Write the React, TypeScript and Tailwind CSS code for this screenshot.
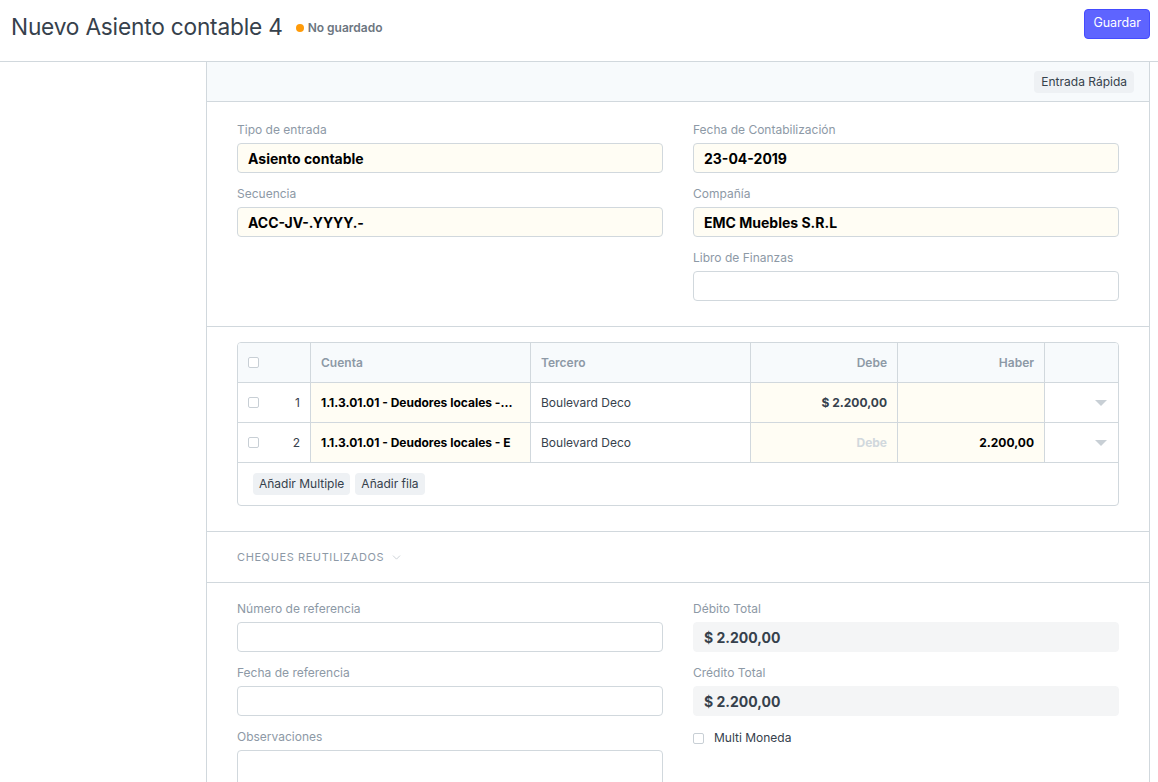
import { ChevronDown } from 'lucide-react';

const font = { fontFamily: 'Inter, "Noto Sans", sans-serif' };

function Label({ children }: { children: React.ReactNode }) {
  return <div className="text-[12px] leading-[14px] text-[#8d99a6] mb-[6px]">{children}</div>;
}

function Field({ label, value, tone = 'white' }: { label: string; value?: string; tone?: 'yellow' | 'white' | 'gray' }) {
  const box =
    tone === 'yellow'
      ? 'bg-[#fffdf4] border border-[#d1d8dd]'
      : tone === 'gray'
        ? 'bg-[#f4f5f6] border border-[#f4f5f6]'
        : 'bg-white border border-[#d1d8dd]';
  return (
    <div className="mb-[14px]">
      <Label>{label}</Label>
      <div className={`h-[30px] rounded-[4px] px-[10px] flex items-center text-[14px] font-bold ${tone === 'gray' ? 'text-[#36414c]' : 'text-black'} ${box}`}>
        {value}
      </div>
    </div>
  );
}

function Check() {
  return <span className="inline-block w-[11px] h-[11px] rounded-[2px] border border-[#c8cfd5] bg-white" />;
}

function Caret() {
  return (
    <svg width="12" height="6" viewBox="0 0 12 6">
      <path d="M0 0h12L6 6z" fill="#c8cfd5" />
    </svg>
  );
}

export default function App() {
  return (
    <div className="w-[1158px] h-[782px] overflow-hidden bg-white text-[#36414c]" style={font}>
      <header className="h-[62px] border-b border-[#d1d8dd] flex items-center pl-[11px] pr-[8px]">
        <h1 className="text-[22.7px] leading-none text-[#36414c] tracking-[-0.2px] mt-[-6px]">Nuevo Asiento contable 4</h1>
        <span className="ml-[13px] mt-[-6px] w-[8px] h-[8px] rounded-full bg-[#ff9b09]" />
        <span className="ml-[4px] mt-[-6px] text-[12px] font-semibold text-[#6c7680]">No guardado</span>
        <button className="ml-auto mt-[-14px] h-[30px] px-[8px] rounded-[4px] bg-[#5e64ff] border border-[#444bff] text-white text-[12.5px]">
          Guardar
        </button>
      </header>

      <div className="flex">
        <aside className="w-[206px] shrink-0" />
        <main className="w-[944px] border-l border-r border-[#d1d8dd] h-[720px]">
          <div className="h-[40px] bg-[#f7fafc] border-b border-[#d1d8dd] flex items-center justify-end pr-[15px]">
            <span className="h-[22px] px-[7px] rounded-[4px] bg-[#eef1f4] text-[12px] text-[#36414c] flex items-center">Entrada Rápida</span>
          </div>

          <section className="border-b border-[#d1d8dd] px-[30px] pt-[21px] pb-[11px] grid grid-cols-2 gap-x-[30px]">
            <div>
              <Field label="Tipo de entrada" value="Asiento contable" tone="yellow" />
              <Field label="Secuencia" value="ACC-JV-.YYYY.-" tone="yellow" />
            </div>
            <div>
              <Field label="Fecha de Contabilización" value="23-04-2019" tone="yellow" />
              <Field label="Compañía" value="EMC Muebles S.R.L" tone="yellow" />
              <Field label="Libro de Finanzas" />
            </div>
          </section>

          <section className="border-b border-[#d1d8dd] px-[30px] pt-[15px] pb-[25px]">
            <div className="border border-[#d1d8dd] rounded-[4px] overflow-hidden text-[12px]">
              <div className="flex h-[40px] bg-[#f7fafc] border-b border-[#d1d8dd] font-semibold text-[#8d99a6]">
                <div className="w-[73px] border-r border-[#d1d8dd] flex items-center pl-[10px]"><Check /></div>
                <div className="w-[220px] border-r border-[#d1d8dd] flex items-center px-[10px]">Cuenta</div>
                <div className="w-[220px] border-r border-[#d1d8dd] flex items-center px-[10px]">Tercero</div>
                <div className="w-[147px] border-r border-[#d1d8dd] flex items-center justify-end px-[10px]">Debe</div>
                <div className="w-[147px] border-r border-[#d1d8dd] flex items-center justify-end px-[10px]">Haber</div>
                <div className="flex-1" />
              </div>
              {[
                { n: 1, cuenta: '1.1.3.01.01 - Deudores locales -...', debe: '$ 2.200,00', haber: '' },
                { n: 2, cuenta: '1.1.3.01.01 - Deudores locales - E', debe: '', haber: '2.200,00' },
              ].map((r) => (
                <div key={r.n} className="flex h-[40px] border-b border-[#d1d8dd]">
                  <div className="w-[73px] border-r border-[#d1d8dd] flex items-center pl-[10px] pr-[10px] justify-between">
                    <Check />
                    <span className="text-[#36414c]">{r.n}</span>
                  </div>
                  <div className="w-[220px] border-r border-[#d1d8dd] bg-[#fffdf4] flex items-center px-[10px] font-bold text-black whitespace-nowrap overflow-hidden">{r.cuenta}</div>
                  <div className="w-[220px] border-r border-[#d1d8dd] flex items-center px-[10px] text-[#36414c]">Boulevard Deco</div>
                  <div className="w-[147px] border-r border-[#d1d8dd] bg-[#fffdf4] flex items-center justify-end px-[10px] font-bold">
                    {r.debe ? <span className="text-[#36414c]">{r.debe}</span> : <span className="text-[#d1d8dd]">Debe</span>}
                  </div>
                  <div className="w-[147px] border-r border-[#d1d8dd] bg-[#fffdf4] flex items-center justify-end px-[10px] font-bold text-black">{r.haber}</div>
                  <div className="flex-1 flex items-center justify-end pr-[11px]"><Caret /></div>
                </div>
              ))}
              <div className="h-[42px] flex items-center gap-[5px] px-[15px]">
                <span className="h-[22px] px-[6px] rounded-[4px] bg-[#eef1f4] flex items-center text-[#36414c]">Añadir Multiple</span>
                <span className="h-[22px] px-[6px] rounded-[4px] bg-[#eef1f4] flex items-center text-[#36414c]">Añadir fila</span>
              </div>
            </div>
          </section>

          <section className="h-[51px] border-b border-[#d1d8dd] px-[30px] flex items-center">
            <span className="text-[11px] tracking-[0.6px] text-[#8d99a6] uppercase">Cheques reutilizados</span>
            <ChevronDown className="ml-[6px] text-[#c0c8ce]" size={13} strokeWidth={1.5} />
          </section>

          <section className="px-[30px] pt-[19px] grid grid-cols-2 gap-x-[30px]">
            <div>
              <Field label="Número de referencia" />
              <Field label="Fecha de referencia" />
              <div>
                <Label>Observaciones</Label>
                <div className="h-[60px] rounded-[4px] border border-[#d1d8dd]" />
              </div>
            </div>
            <div>
              <Field label="Débito Total" value="$ 2.200,00" tone="gray" />
              <Field label="Crédito Total" value="$ 2.200,00" tone="gray" />
              <div className="flex items-center gap-[10px] text-[12px] text-[#36414c] mt-[-1px]">
                <Check />
                <span>Multi Moneda</span>
              </div>
            </div>
          </section>
        </main>
      </div>
    </div>
  );
}
